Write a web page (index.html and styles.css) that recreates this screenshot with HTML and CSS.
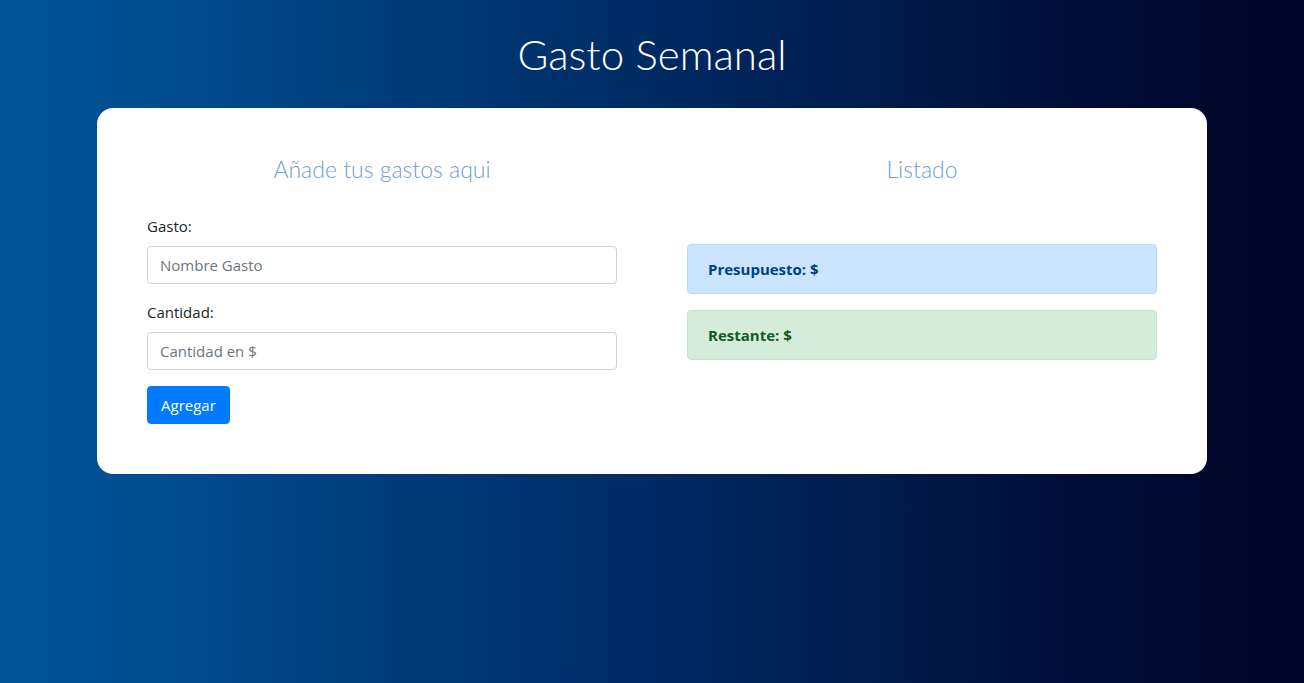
FILE: index.html
```html
<!DOCTYPE html>
<html lang="es">
<head>
<meta charset="utf-8">
<title>Gasto Semanal</title>
<link rel="stylesheet" href="styles.css">
</head>
<body>
<header class="header">
  <h1 class="title">Gasto Semanal</h1>
</header>
<main class="card">
  <section class="col">
    <h2 class="subtitle">Añade tus gastos aqui</h2>
    <form class="form">
      <div class="group">
        <label class="label" for="gasto">Gasto:</label>
        <input class="input" id="gasto" type="text" placeholder="Nombre Gasto">
      </div>
      <div class="group">
        <label class="label" for="cantidad">Cantidad:</label>
        <input class="input" id="cantidad" type="text" placeholder="Cantidad en $">
      </div>
      <button class="btn" type="button">Agregar</button>
    </form>
  </section>
  <section class="col">
    <h2 class="subtitle">Listado</h2>
    <div class="list">
      <div class="alert alert-primary">Presupuesto: $</div>
      <div class="alert alert-success">Restante: $</div>
    </div>
  </section>
</main>
</body>
</html>
```

FILE: styles.css
```css
* { box-sizing: border-box; }
html, body { margin: 0; padding: 0; }
body {
  min-height: 683px;
  background: linear-gradient(to right, #005598 0%, #004a8c 15%, #002a63 50%, #000c34 85%, #000428 100%);
  font-family: "Open Sans", "Noto Sans", sans-serif;
  font-size: 16px;
  color: #212529;
}
.header {
  padding-top: 30px;
}
.title {
  margin: 0 0 30px;
  text-align: center;
  font-family: Lato, "Open Sans", sans-serif;
  font-weight: 300;
  font-size: 42px;
  line-height: 48px;
  color: #ffffff;
}
.card {
  width: 1110px;
  margin: 0 auto;
  background: #ffffff;
  border-radius: 16px;
  padding: 50px;
  display: grid;
  grid-template-columns: 1fr 1fr;
  column-gap: 70px;
}
.subtitle {
  margin: -3px 0 0;
  text-align: center;
  font-family: Lato, "Open Sans", sans-serif;
  font-weight: 300;
  font-size: 23px;
  line-height: 29px;
  color: #6f9dcf;
}
.form { margin-top: 30px; }
.group { margin-bottom: 16px; }
.label {
  display: block;
  line-height: 24px;
  margin-bottom: 8px;
  font-size: 15px;
}
.input {
  display: block;
  width: 100%;
  height: 38px;
  padding: 6px 12px;
  font-family: inherit;
  font-size: 15px;
  color: #495057;
  border: 1px solid #ced4da;
  border-radius: 4px;
  background: #fff;
}
.input::placeholder { color: #6c757d; }
.btn {
  display: block;
  height: 38px;
  padding: 6px 13px;
  font-family: inherit;
  font-size: 15px;
  color: #fff;
  background: #007bff;
  border: 1px solid #007bff;
  border-radius: 4px;
}
.list {
  margin-top: 60px;
  display: flex;
  flex-direction: column;
  gap: 16px;
}
.alert {
  padding: 12px 20px;
  line-height: 24px;
  border: 1px solid transparent;
  border-radius: 4px;
  font-weight: 700;
  font-size: 15px;
}
.alert-primary {
  background: #cce5ff;
  border-color: #b8daff;
  color: #004085;
}
.alert-success {
  background: #d4edda;
  border-color: #c3e6cb;
  color: #155724;
}
```
